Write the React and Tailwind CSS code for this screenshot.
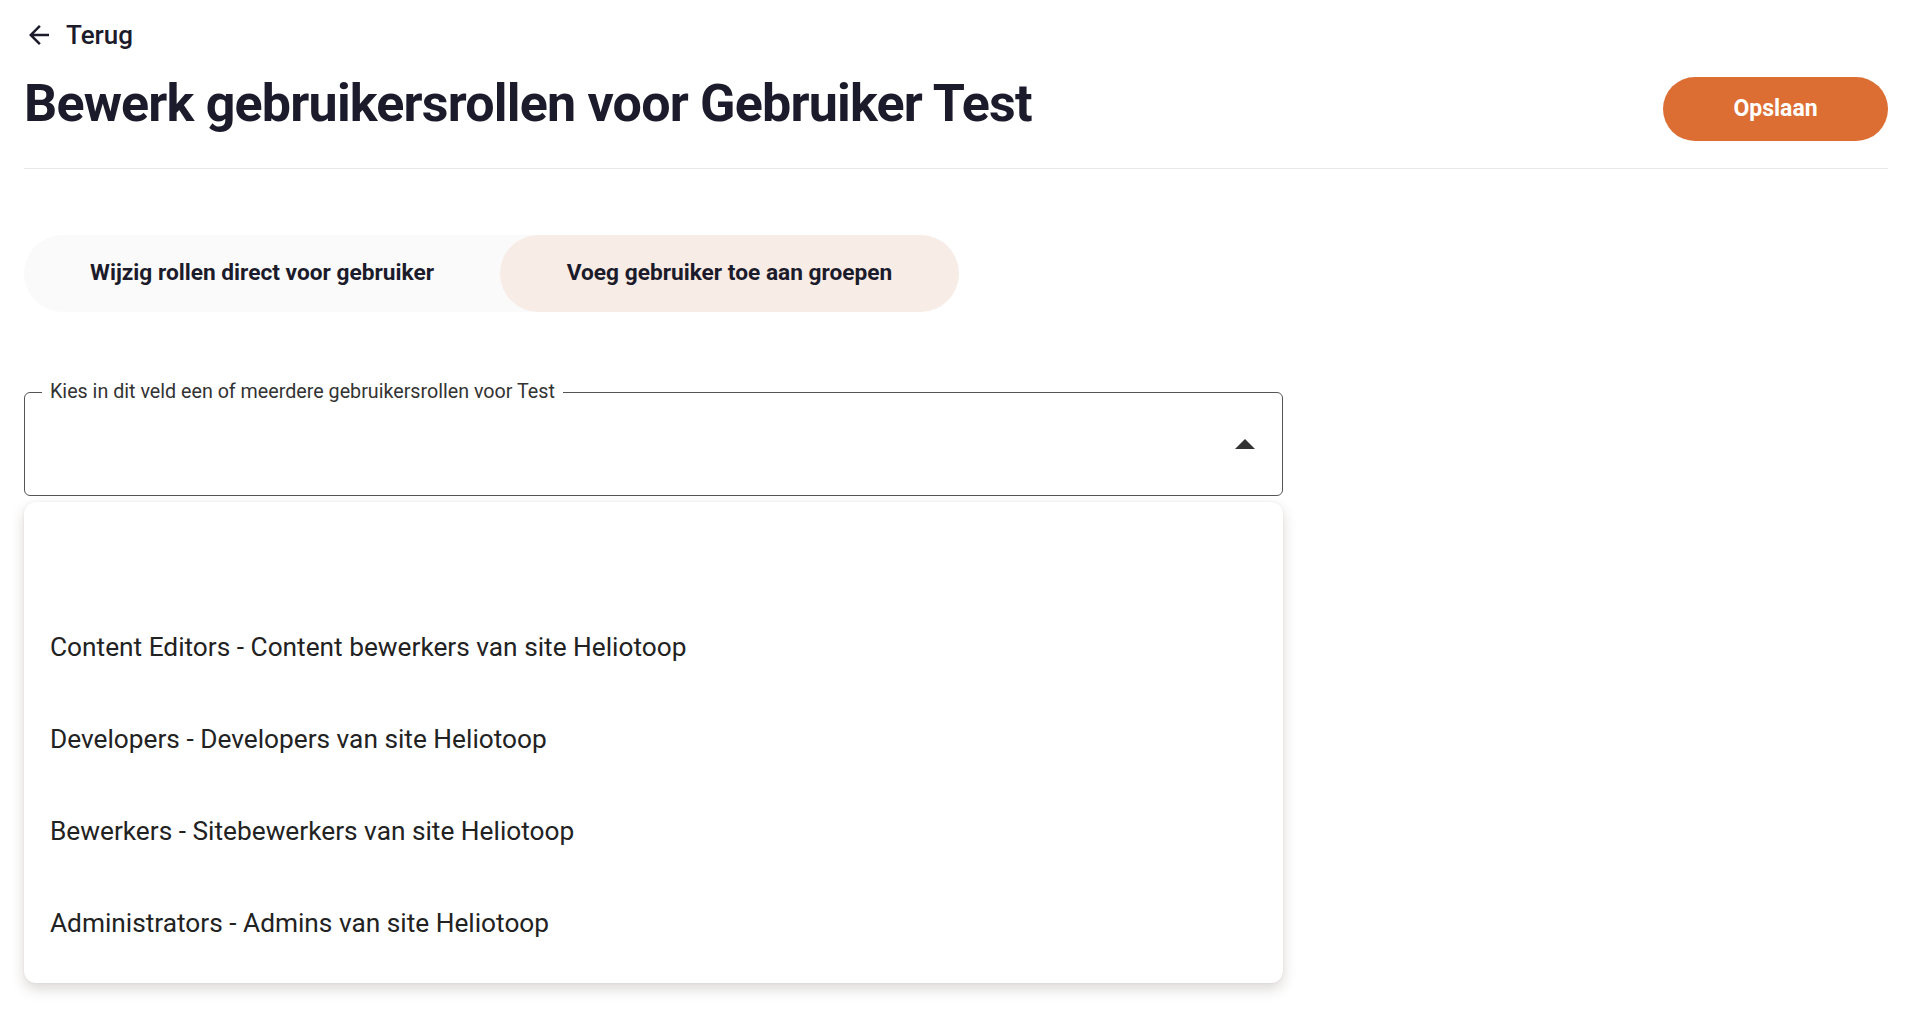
import React, { useState } from 'react';

const roles = [
    '',
    'Content Editors - Content bewerkers van site Heliotoop',
    'Developers - Developers van site Heliotoop',
    'Bewerkers - Sitebewerkers van site Heliotoop',
    'Administrators - Admins van site Heliotoop',
];

const ArrowLeft = () => (
    <svg width="30" height="30" viewBox="0 0 24 24" fill="#1c1b2b">
        <path d="M20 11H7.83l5.59-5.59L12 4l-8 8 8 8 1.41-1.41L7.83 13H20v-2z" />
    </svg>
);

const EditUserRoles = () => {
    const [tab, setTab] = useState('groups');

    return (
        <div className="min-h-screen bg-white pl-6 pr-8 text-[#1c1b2b]" style={{ fontFamily: 'Roboto, "Noto Sans", sans-serif' }}>
            <button className="flex h-[30px] items-center gap-3 mt-[20px] text-[26px] font-medium">
                <ArrowLeft />
                <span>Terug</span>
            </button>

            <div className="flex items-start justify-between border-b border-[#e8e8e8] pt-[22px] pb-[27px]">
                <h1 className="text-[52px] font-bold leading-[64px] tracking-[-0.8px]">
                    Bewerk gebruikersrollen voor Gebruiker Test
                </h1>
                <button className="mt-[5px] h-16 w-[225px] rounded-full bg-[#dd6e33] text-[23px] font-bold text-white">
                    Opslaan
                </button>
            </div>

            <div className="mt-[66px] flex w-[935px] rounded-full bg-[#fafafa]">
                <button
                    onClick={() => setTab('direct')}
                    className={`h-[77px] w-[476px] rounded-full text-[22.7px] font-bold ${tab === 'direct' ? 'bg-[#f8ece6]' : ''}`}
                >
                    Wijzig rollen direct voor gebruiker
                </button>
                <button
                    onClick={() => setTab('groups')}
                    className={`h-[77px] w-[459px] rounded-full text-[22.7px] font-bold ${tab === 'groups' ? 'bg-[#f8ece6]' : ''}`}
                >
                    Voeg gebruiker toe aan groepen
                </button>
            </div>

            <div className="mt-[80px] w-[1259px]">
                <div className="relative flex h-[104px] items-center justify-end rounded-[6px] border border-[#555] pr-[27px]">
                    <span className="absolute -top-[13px] left-[17px] bg-white px-[8px] text-[19.7px] leading-[24px] text-[#333]">
                        Kies in dit veld een of meerdere gebruikersrollen voor Test
                    </span>
                    <svg width="20" height="10" viewBox="0 0 20 10">
                        <path d="M10 0L20 10H0z" fill="#333" />
                    </svg>
                </div>

                <ul className="mt-[6px] rounded-[12px] bg-white pt-[8px] pb-[13px] shadow-[0_6px_14px_rgba(60,40,30,0.18),0_0_3px_rgba(0,0,0,0.06)]">
                    {roles.map((role, index) => (
                        <li key={index} className="flex h-[92px] items-center px-[26px] text-[26.25px] text-[#222]">
                            {role}
                        </li>
                    ))}
                </ul>
            </div>
        </div>
    );
};

export default EditUserRoles;
